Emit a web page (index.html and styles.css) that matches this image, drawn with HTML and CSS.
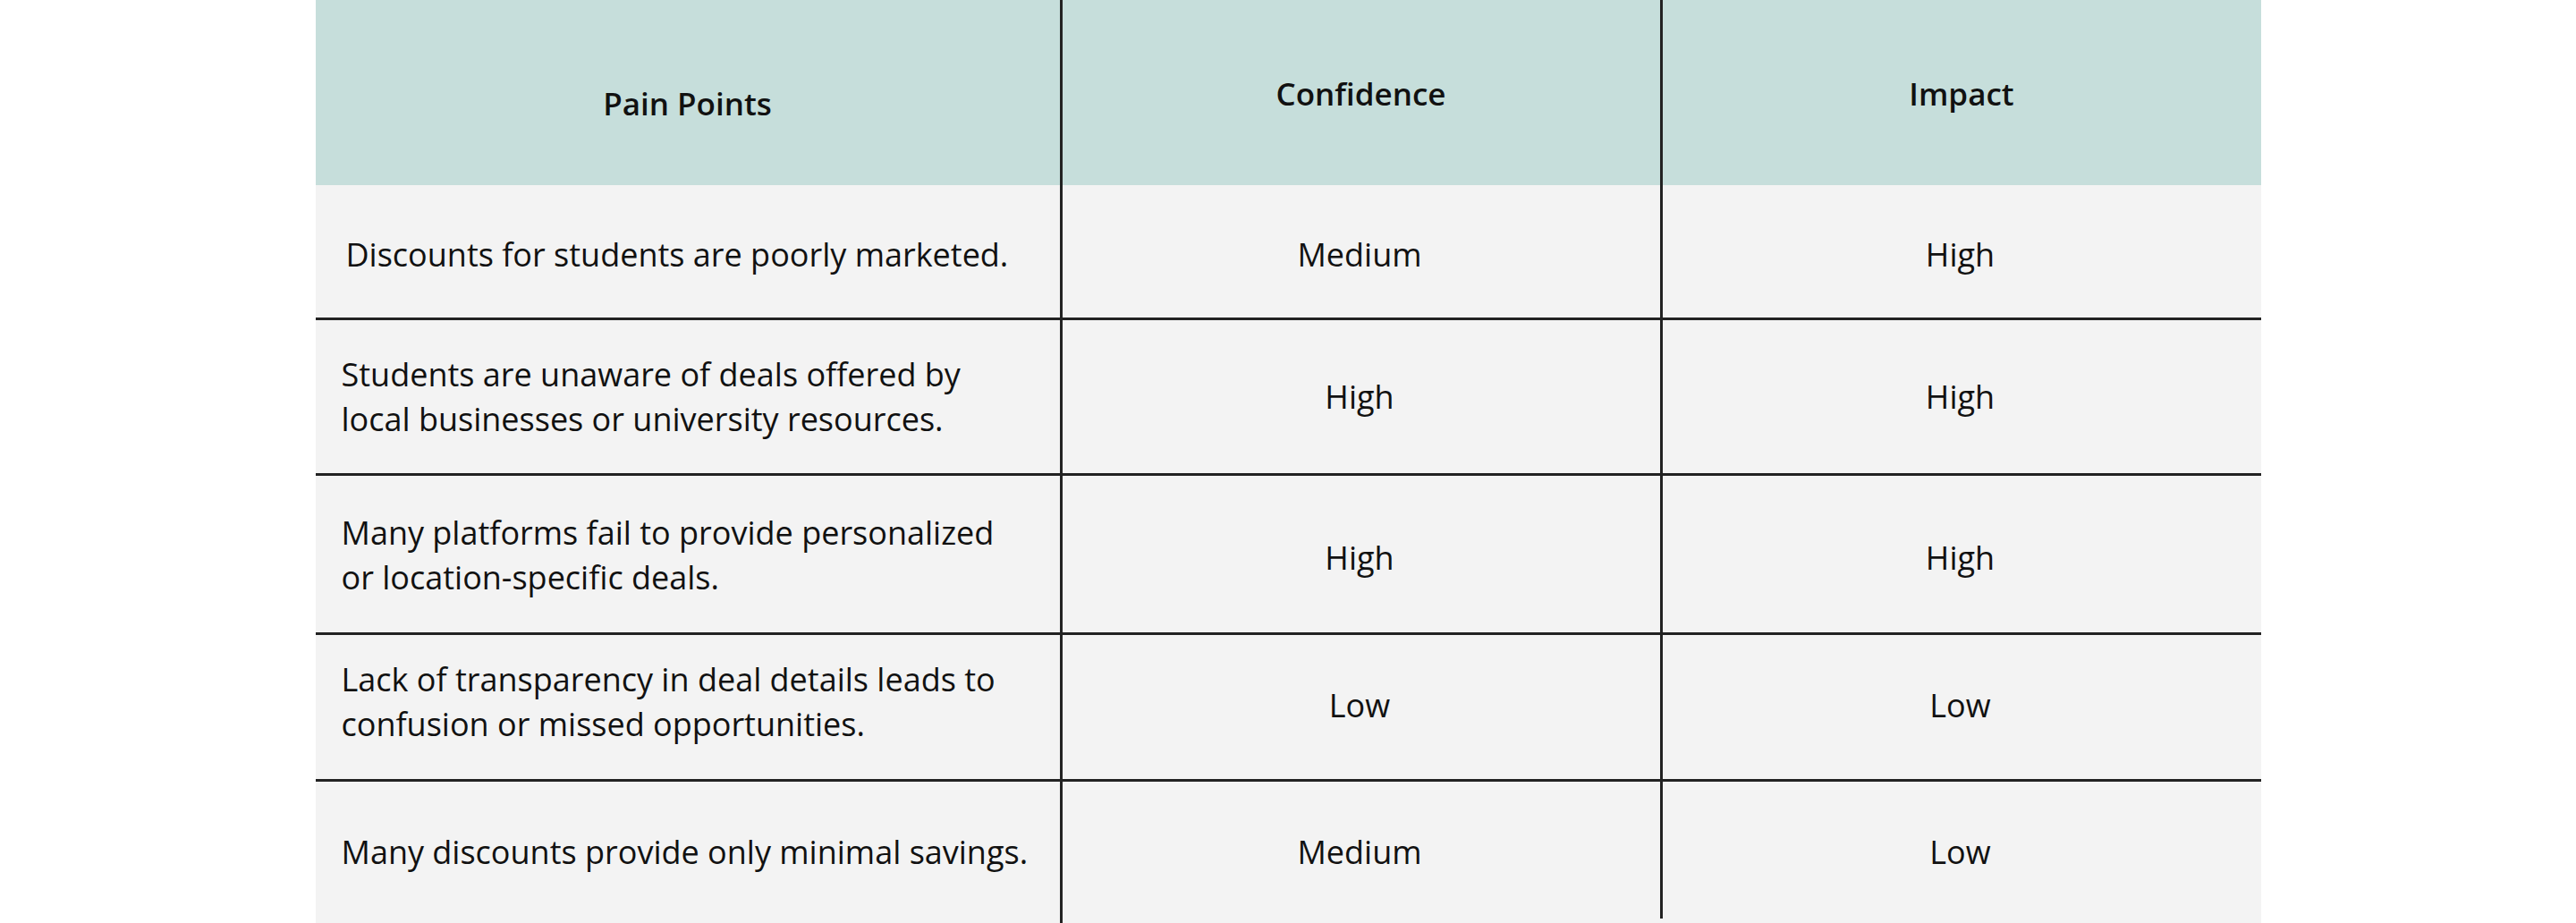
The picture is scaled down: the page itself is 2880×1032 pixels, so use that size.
FILE: index.html
```html
<!DOCTYPE html>
<html lang="en">
<head>
<meta charset="utf-8">
<title>Pain Points</title>
<link rel="stylesheet" href="styles.css">
</head>
<body>
<div class="table">
  <div class="cell head first">Pain Points</div>
  <div class="cell head col">Confidence</div>
  <div class="cell head col">Impact</div>

  <div class="cell text row r1">Discounts for students are poorly marketed.</div>
  <div class="cell val row col r1">Medium</div>
  <div class="cell val row col r1">High</div>

  <div class="cell text row">Students are unaware of deals offered by local businesses or university resources.</div>
  <div class="cell val row col">High</div>
  <div class="cell val row col">High</div>

  <div class="cell text row r3">Many platforms fail to provide personalized or location-specific deals.</div>
  <div class="cell val row col r3v">High</div>
  <div class="cell val row col r3v">High</div>

  <div class="cell text row r4">Lack of transparency in deal details leads to confusion or missed opportunities.</div>
  <div class="cell val row col r4v">Low</div>
  <div class="cell val row col r4v">Low</div>

  <div class="cell text">Many discounts provide only minimal savings.</div>
  <div class="cell val col">Medium</div>
  <div class="cell val col last">Low</div>
</div>
</body>
</html>
```

FILE: styles.css
```css
html, body {
  margin: 0;
  padding: 0;
  background: #ffffff;
}

body {
  font-family: "Open Sans", "Noto Sans", sans-serif;
  color: #111111;
}

.table {
  width: 2175px;
  height: 1032px;
  margin: 0 auto;
  display: grid;
  grid-template-columns: 832px 671px 672px;
  grid-template-rows: 207px 151px 174px 178px 164px 158px;
  background: #f3f3f3;
}

.cell {
  box-sizing: border-box;
  display: flex;
  align-items: center;
  font-size: 36px;
  line-height: 50px;
}

.head {
  background: #c6dedb;
  justify-content: center;
  font-weight: 600;
  font-size: 35px;
  padding-top: 2px;
}

.head.first {
  padding-top: 24px;
}

.col {
  border-left: 3px solid #222222;
}

.row {
  border-bottom: 3px solid #222222;
}

.text {
  padding: 0 28px 0 29px;
}

.text.r1 {
  padding-left: 34px;
}

.r1 {
  padding-top: 7px;
}

.text.r3 {
  padding-top: 3px;
}

.r3v {
  padding-top: 9px;
}

.text.r4 {
  padding-bottom: 11px;
}

.r4v {
  padding-bottom: 3px;
}

.val {
  justify-content: center;
  padding-right: 3px;
}

.val.last {
  border-left: none;
  background-image: linear-gradient(#222222, #222222);
  background-size: 3px 153px;
  background-repeat: no-repeat;
  background-position: 0 0;
  padding-left: 3px;
}
```
